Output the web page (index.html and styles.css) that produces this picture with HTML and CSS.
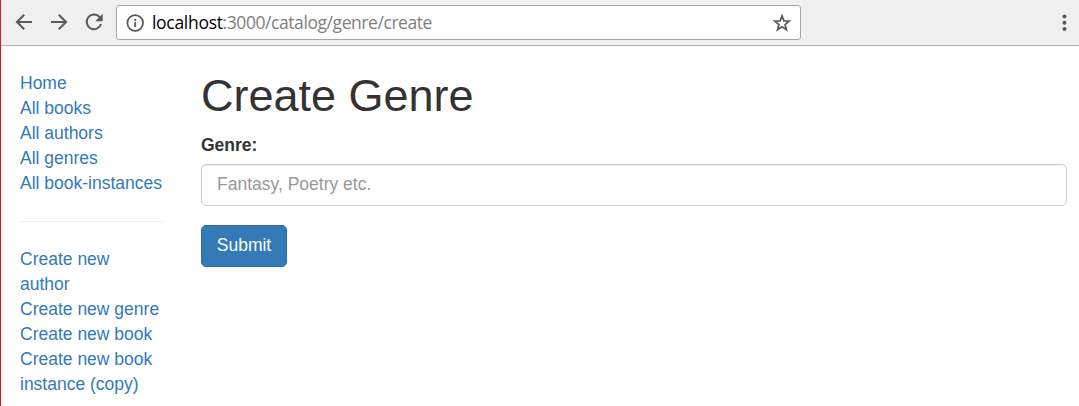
FILE: index.html
```html
<!DOCTYPE html>
<html lang="en">
<head>
<meta charset="utf-8">
<title>Create Genre</title>
<link rel="stylesheet" href="styles.css">
</head>
<body>
<div class="window">
  <header class="toolbar">
    <nav class="nav-buttons">
      <svg class="icon" viewBox="0 0 20 20"><path d="M18 10H3M10.2 2.7 2.9 10l7.3 7.3"/></svg>
      <svg class="icon" viewBox="0 0 20 20"><path d="M2 10h15M9.800 2.700 17.100 10l-7.300 7.300"/></svg>
      <svg class="icon" viewBox="0 0 20 20"><path d="M15.700 5.300A7.300 7.300 0 1 0 17 12"/><path class="solid" d="M18.700 1.800v7.400h-7.400z"/></svg>
    </nav>
    <div class="address">
      <svg class="info" viewBox="0 0 18 18"><circle cx="9.200" cy="9" r="7.800"/><path d="M9.200 8v5M9.200 4.900v2"/></svg>
      <span class="url"><span class="host">localhost</span>:3000/catalog/genre/create</span>
      <svg class="star" viewBox="0 0 20 20"><path d="m10 2.900 1.900 4.900 5.200.3-4 3.400 1.300 5.200-4.400-2.900-4.400 2.900 1.300-5.200-4-3.400 5.200-.3z"/></svg>
    </div>
    <svg class="menu" viewBox="0 0 6 18"><circle cx="2.500" cy="2.500" r="2"/><circle cx="2.500" cy="8.800" r="2"/><circle cx="2.500" cy="15.100" r="2"/></svg>
  </header>
  <div class="page">
    <aside class="sidebar">
      <ul class="links">
        <li><a href="#">Home</a></li>
        <li><a href="#">All books</a></li>
        <li><a href="#">All authors</a></li>
        <li><a href="#">All genres</a></li>
        <li><a href="#">All book-instances</a></li>
      </ul>
      <hr class="divider">
      <ul class="links">
        <li><a href="#">Create new author</a></li>
        <li><a href="#">Create new genre</a></li>
        <li><a href="#">Create new book</a></li>
        <li><a href="#">Create new book instance (copy)</a></li>
      </ul>
    </aside>
    <main class="content">
      <h1 class="title">Create Genre</h1>
      <form class="form">
        <label class="label" for="genre">Genre:</label>
        <input class="input" id="genre" type="text" placeholder="Fantasy, Poetry etc.">
        <button class="submit" type="button">Submit</button>
      </form>
    </main>
  </div>
</div>
</body>
</html>
```
FILE: styles.css
```css
* { box-sizing: border-box; }
body {
  margin: 0;
  background: #fff;
  color: #333;
  font: 17.5px/25px "Liberation Sans", Arial, sans-serif;
}
.window {
  height: 406px;
  overflow: hidden;
  border-left: 1px solid #cb1e26;
}
.toolbar {
  display: flex;
  align-items: flex-start;
  height: 46px;
  padding: 5px 11px 0 13px;
  background: #f0f0f0;
  border-bottom: 1px solid #b0b0b0;
}
.nav-buttons { display: flex; gap: 15px; padding-top: 7px; }
.icon { width: 20px; height: 20px; fill: none; stroke: #5a5a5a; stroke-width: 2; }
.icon .solid { fill: #5a5a5a; stroke: none; }
.address {
  display: flex;
  align-items: center;
  width: 685px;
  height: 35px;
  margin-left: 12px;
  padding: 0 8px 0 9px;
  background: #fff;
  border: 1px solid #a6a6a6;
  border-radius: 3px;
}
.info { width: 18px; height: 18px; margin-top: 1px; fill: none; stroke: #5a5a5a; stroke-width: 1.8; }
.url {
  flex: 1;
  margin-left: 8px;
  color: #808080;
  font-family: "Open Sans", "Noto Sans", sans-serif;
  font-size: 17.5px;
  letter-spacing: -0.43px;
  white-space: nowrap;
}
.host { color: #000; letter-spacing: -0.3px; }
.star { width: 20px; height: 20px; margin-top: 1px; fill: none; stroke: #5a5a5a; stroke-width: 1.8; }
.menu { width: 6px; height: 18px; margin: 9px 0 0 auto; fill: #5a5a5a; }
.page { display: flex; padding: 25px 12px 0 19px; }
.sidebar { width: 143px; margin-right: 38px; }
.links { margin: 0; padding: 0; list-style: none; }
.links a { color: #337ab7; text-decoration: none; }
.divider { margin: 25px 0; border: 0; border-top: 1px solid #eee; }
.content { flex: 1; }
.title { margin: 0 0 13px; font-size: 45px; font-weight: 400; line-height: 49px; }
.form { display: flex; flex-direction: column; align-items: flex-start; }
.label { margin-bottom: 6px; font-weight: 700; }
.input {
  width: 100%;
  height: 42px;
  margin-bottom: 19px;
  padding: 6px 15px 8px;
  border: 1px solid #ccc;
  border-radius: 5px;
  box-shadow: inset 0 1px 1px rgba(0, 0, 0, .075);
  font: inherit;
}
.input::placeholder { color: #999; opacity: 1; }
.submit {
  width: 86px;
  height: 42px;
  padding: 0 0 2px;
  border: 1px solid #2e6da4;
  border-radius: 5px;
  background: #337ab7;
  color: #fff;
  font: inherit;
}
```
